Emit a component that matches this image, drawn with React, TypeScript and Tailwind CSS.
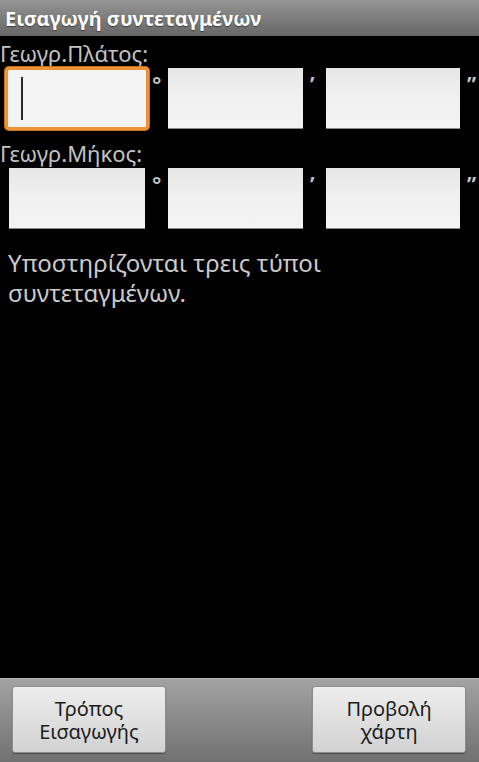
import React from "react";

const font = { fontFamily: '"Noto Sans", "Open Sans", sans-serif' };

function Field({ focused = false }: { focused?: boolean }) {
  if (focused) {
    return (
      <div className="h-[63px] rounded-[4px] border-[3px] border-[#ee9334] bg-[#f3f3f3] shadow-[0_0_0_1px_#c9731f] relative">
        <div className="absolute left-[13px] top-[7px] h-[43px] w-[2px] bg-[#2a2a2a]" />
      </div>
    );
  }
  return (
    <div className="h-[63px] px-[4px] py-[1px]">
      <div className="h-full bg-gradient-to-b from-[#e6e6e6] via-[#f1f1f1] to-[#f3f3f3] border-b border-[#8a8a8a]" />
    </div>
  );
}

function Mark({ children }: { children: React.ReactNode }) {
  return (
    <div className="pt-[6px] pl-[3px] text-[22px] font-semibold leading-none text-[#c4c4c4]">{children}</div>
  );
}

function CoordRow({ focused = false }: { focused?: boolean }) {
  return (
    <div className="grid grid-cols-[144px_15px_143px_15px_142px_15px] pl-[5px]">
      <Field focused={focused} />
      <Mark>°</Mark>
      <Field />
      <Mark>’</Mark>
      <Field />
      <Mark>”</Mark>
    </div>
  );
}

function BarButton({ top, bottom }: { top: string; bottom: string }) {
  return (
    <button className="w-[154px] h-[67px] rounded-[3px] border border-[#8d8d8d] bg-gradient-to-b from-[#ededed] to-[#d2d2d2] text-[20px] leading-[23px] text-[#1c1c1c] text-center shadow-[0_1px_1px_rgba(0,0,0,0.35)]">
      {top}
      <br />
      {bottom}
    </button>
  );
}

export default function App() {
  return (
    <div className="w-[479px] h-[762px] bg-black flex flex-col overflow-hidden" style={font}>
      <div className="h-[36px] bg-gradient-to-b from-[#959595] to-[#666666] px-[5px] flex items-center">
        <h1 className="text-[20px] font-bold text-white leading-none pt-[2px] [text-shadow:0_1px_1px_rgba(0,0,0,0.5)]">
          Εισαγωγή συντεταγμένων
        </h1>
      </div>

      <div className="mt-[3px] h-[28px] text-[22px] leading-[28px] text-[#c2c2c2]">Γεωγρ.Πλάτος:</div>
      <CoordRow focused />

      <div className="mt-[9px] h-[28px] text-[22px] leading-[28px] text-[#c2c2c2]">Γεωγρ.Μήκος:</div>
      <CoordRow />

      <p className="mt-[18px] pl-[8px] text-[24px] tracking-[0.1px] leading-[30px] text-[#cbcbcb]">
        Υποστηρίζονται τρεις τύποι
        <br />
        συντεταγμένων.
      </p>

      <div className="flex-1" />

      <div className="h-[84px] bg-gradient-to-b from-[#a3a3a3] to-[#717171] border-t border-[#b5b5b5] pl-[12px] pr-[13px] pt-[7px] flex justify-between items-start">
        <BarButton top="Τρόπος" bottom="Εισαγωγής" />
        <BarButton top="Προβολή" bottom="χάρτη" />
      </div>
    </div>
  );
}
